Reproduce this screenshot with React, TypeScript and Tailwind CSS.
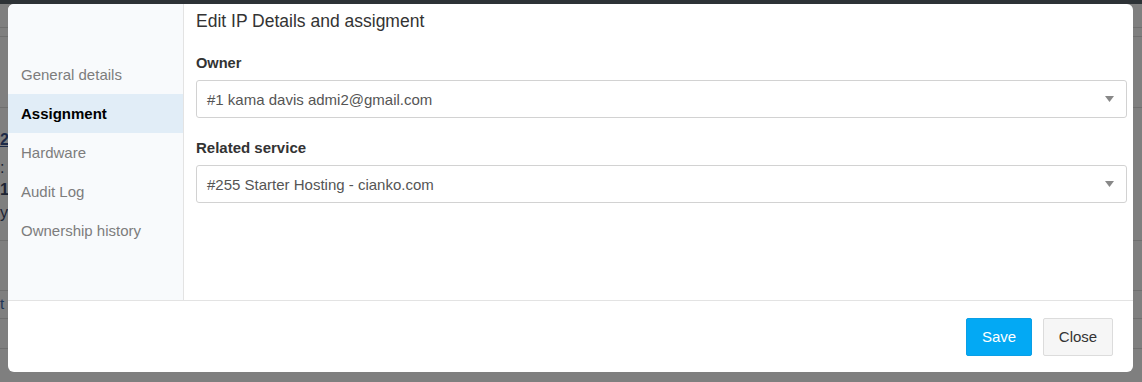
import { useState } from "react"

const NAV_ITEMS = ["General details", "Assignment", "Hardware", "Audit Log", "Ownership history"]

function Caret() {
  return (
    <svg className="h-[6px] w-[9px]" viewBox="0 0 9 6">
      <path d="M0 0 H9 L4.5 6 Z" fill="#888" />
    </svg>
  )
}

function SelectBox({ value }: { value: string }) {
  return (
    <div className="flex h-[38px] items-center justify-between rounded-[3px] border border-[#d2d2d2] bg-white pl-[10px] pr-[12px] text-[15px] text-[#555]">
      <span className="translate-y-[1px]">{value}</span>
      <Caret />
    </div>
  )
}

function PageBehind() {
  return (
    <div className="flex h-full flex-col text-[#1c2333]">
      <div className="h-[4px] bg-[#2d3236]" />
      <div className="h-[24px] border-b border-[#6f6f6f]" />
      <div className="h-[9px] border-b border-[#6f6f6f]" />
      <div className="h-[71px] border-b border-[#6f6f6f]" />
      <div className="flex h-[133px] flex-col border-b border-[#6f6f6f] pt-[21px] text-[16px] leading-[22px]">
        <span className="font-bold text-[#1d2a48] underline">2</span>
        <span className="mt-[6px]">:</span>
        <span className="font-bold">1</span>
        <span className="mt-[1px]">y</span>
      </div>
      <div className="h-[50px] border-b border-[#6f6f6f]" />
      <div className="flex h-[28px] items-center border-b border-[#6f6f6f] text-[15px] text-[#1d3557]">
        <span>t</span>
      </div>
      <div className="h-[30px] border-b border-[#6f6f6f]" />
    </div>
  )
}

export default function App() {
  const [active, setActive] = useState("Assignment")

  return (
    <div className="relative h-[382px] w-[1142px] overflow-hidden bg-[#7f7f7f] font-['Liberation_Sans',Arial,sans-serif]">
      <PageBehind />

      <div className="absolute left-[8px] top-[4px] flex h-[368px] w-[1125px] flex-col overflow-hidden rounded-[6px] bg-white">
        <div className="flex h-[296px]">
          <nav className="w-[176px] shrink-0 border-r border-[#e3e3e3] bg-[#f8fafc] pt-[51px]">
            {NAV_ITEMS.map((item) => (
              <button
                className={`flex h-[39px] w-full items-center pl-[13px] pt-[2px] text-left text-[15px] ${
                  active === item ? "bg-[#e1edf7] font-bold text-black" : "text-[#7d7d7d]"
                }`}
                key={item}
                onClick={() => setActive(item)}
                type="button"
              >
                {item}
              </button>
            ))}
          </nav>

          <div className="flex-1 pl-[12px] pr-[6px] pt-[7px]">
            <h2 className="text-[17.5px] leading-[20px] text-[#333]">Edit IP Details and assigment</h2>

            <p className="mt-[22px] text-[14.6px] font-bold leading-[20px] text-[#333]">Owner</p>
            <div className="mt-[7px]">
              <SelectBox value="#1 kama davis admi2@gmail.com" />
            </div>

            <p className="mt-[20px] text-[15px] font-bold leading-[20px] text-[#333]">Related service</p>
            <div className="mt-[7px]">
              <SelectBox value="#255 Starter Hosting - cianko.com" />
            </div>
          </div>
        </div>

        <div className="flex flex-1 justify-end gap-[11px] border-t border-[#e3e3e3] pr-[20px] pt-[17px]">
          <button
            className="h-[38px] w-[66px] rounded-[2px] border border-[#0a9fe6] bg-[#03a9f4] text-[15px] text-white"
            type="button"
          >
            Save
          </button>
          <button
            className="h-[38px] w-[70px] rounded-[2px] border border-[#dcdcdc] bg-[#f6f6f6] text-[15px] text-[#333]"
            type="button"
          >
            Close
          </button>
        </div>
      </div>
    </div>
  )
}
